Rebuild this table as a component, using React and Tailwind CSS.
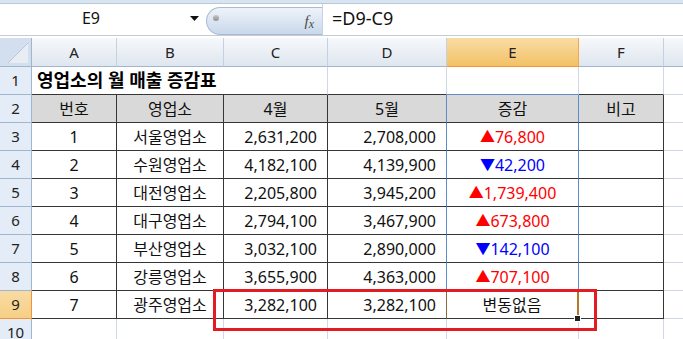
import React from "react";

const FONT = { fontFamily: '"Noto Sans", "Noto Sans CJK KR", sans-serif' };

const data = [
  ["1", "서울영업소", "2,631,200", "2,708,000", "▲", "76,800", "up"],
  ["2", "수원영업소", "4,182,100", "4,139,900", "▼", "42,200", "down"],
  ["3", "대전영업소", "2,205,800", "3,945,200", "▲", "1,739,400", "up"],
  ["4", "대구영업소", "2,794,100", "3,467,900", "▲", "673,800", "up"],
  ["5", "부산영업소", "3,032,100", "2,890,000", "▼", "142,100", "down"],
  ["6", "강릉영업소", "3,655,900", "4,363,000", "▲", "707,100", "up"],
];

function RowHead({ n, active }) {
  return (
    <div
      className={
        "w-[32px] shrink-0 h-full flex items-center justify-center text-[15px] border-r border-b " +
        (active
          ? "bg-gradient-to-b from-[#f9dba3] to-[#f6cf86] border-r-[#f29536] border-b-[#f29536] text-[#222]"
          : "bg-[#e4ecf7] border-r-[#9eb6ce] border-b-[#9eb6ce] text-[#222]")
      }
    >
      {n}
    </div>
  );
}

function ColHead({ w, label, active }) {
  return (
    <div
      className={
        w +
        " shrink-0 h-full flex items-center justify-center text-[15px] text-[#222] border-r border-b " +
        (active
          ? "bg-gradient-to-b from-[#f9dca5] to-[#f2c264] border-r-[#f0a848] border-b-[#f29536]"
          : "bg-gradient-to-b from-[#f6f8fb] to-[#dfe6ef] border-r-[#c3d1e2] border-b-[#9eb6ce]")
      }
    >
      {label}
    </div>
  );
}

const D = "border-[#363636]";

export default function App() {
  return (
    <div className="relative w-[683px] h-[339px] overflow-hidden bg-white" style={FONT}>
      {/* top strip */}
      <div className="h-[4px] bg-[#d9e4f1] border-b border-[#b8c9dd]" />
      {/* formula bar */}
      <div className="h-[31px] flex bg-white">
        <div className="w-[182px] flex items-center justify-center text-[16px] text-[#111] pb-[3px]">E9</div>
        <div className="w-[24px] flex items-center justify-center pb-[2px]">
          <svg width="9" height="5" viewBox="0 0 9 5">
            <path d="M0 0 L9 0 L4.5 5 Z" fill="#111" />
          </svg>
        </div>
        <div className="mt-[3px] w-[116px] h-[28px] rounded-l-full border border-r-0 border-[#a9bbd2] bg-gradient-to-b from-[#eef3f9] to-[#c9d8eb] flex items-center justify-between pl-[6px] pr-[8px]">
          <div className="w-[6px] h-[6px] rounded-full bg-gradient-to-b from-[#c8c8c8] to-[#8f8f8f] mb-[6px]" />
          <span className="italic text-[#4a4a4a] text-[15px] leading-none" style={{ fontFamily: '"Liberation Serif", serif' }}>
            f<span className="text-[12px] relative top-[2px]">x</span>
          </span>
        </div>
        <div className="border-l border-[#c7d3e2] flex-1 flex items-center pl-[9px] text-[18px] text-[#111] pb-[3px]">
          =D9-C9
        </div>
      </div>
      <div className="h-[1px] bg-[#c6ccd6]" />
      <div className="h-[2px] bg-white" />

      {/* column headers */}
      <div className="h-[29px] flex">
        <div className="w-[32px] shrink-0 h-full bg-[#d3dfee] border-r border-b border-[#9eb6ce] relative">
          <svg className="absolute right-[3px] bottom-[3px]" width="20" height="20" viewBox="0 0 20 20">
            <path d="M20 0 L20 20 L0 20 Z" fill="#e8edf3" />
            <path d="M20 0 L0 20" stroke="#b9c7d8" strokeWidth="1" />
          </svg>
        </div>
        <ColHead w="w-[85px]" label="A" />
        <ColHead w="w-[107px]" label="B" />
        <ColHead w="w-[104px]" label="C" />
        <ColHead w="w-[119px]" label="D" />
        <ColHead w="w-[132px]" label="E" active />
        <ColHead w="w-[85px]" label="F" />
        <ColHead w="w-[40px]" label="" />
      </div>

      {/* row 1 */}
      <div className="h-[28px] flex">
        <RowHead n="1" />
        <div className={"w-[296px] shrink-0 border-r border-r-[#d0d7e5] border-b " + D + " flex items-center pl-[5px] text-[18px] font-bold text-black whitespace-nowrap"}>
          영업소의 월 매출 증감표
        </div>
        <div className={"w-[119px] shrink-0 border-r border-r-[#d0d7e5] border-b " + D} />
        <div className="w-[132px] shrink-0 border-r border-r-[#d0d7e5] border-b border-b-[#5b8ccc]" />
        <div className={"w-[85px] shrink-0 border-r border-r-[#d0d7e5] border-b " + D} />
        <div className="w-[40px] shrink-0 border-r border-b border-[#d0d7e5]" />
      </div>

      {/* row 2 header */}
      <div className="h-[28px] flex text-[16px] text-[#111]">
        <RowHead n="2" />
        <div className={"w-[85px] shrink-0 bg-[#d9d9d9] border-r border-b " + D + " flex items-center justify-center"}>번호</div>
        <div className={"w-[107px] shrink-0 bg-[#d9d9d9] border-r border-b " + D + " flex items-center justify-center"}>영업소</div>
        <div className={"w-[104px] shrink-0 bg-[#d9d9d9] border-r border-b " + D + " flex items-center justify-center"}>4월</div>
        <div className={"w-[119px] shrink-0 bg-[#d9d9d9] border-r border-r-[#5b8ccc] border-b " + D + " flex items-center justify-center"}>5월</div>
        <div className={"w-[132px] shrink-0 bg-[#d9d9d9] border-r border-r-[#5b8ccc] border-b " + D + " flex items-center justify-center"}>증감</div>
        <div className={"w-[85px] shrink-0 bg-[#d9d9d9] border-r border-b " + D + " flex items-center justify-center"}>비고</div>
        <div className="w-[40px] shrink-0 border-r border-b border-[#d0d7e5]" />
      </div>

      {/* rows 3-8 */}
      {data.map((r, i) => (
        <div key={i} className="h-[28px] flex text-[16px] text-[#111]">
          <RowHead n={String(i + 3)} />
          <div className={"w-[85px] shrink-0 border-r border-b " + D + " flex items-center justify-center"}>{r[0]}</div>
          <div className={"w-[107px] shrink-0 border-r border-b " + D + " flex items-center justify-center"}>{r[1]}</div>
          <div className={"w-[104px] shrink-0 border-r border-b " + D + " flex items-center justify-end pr-[10px]"}>{r[2]}</div>
          <div className={"w-[119px] shrink-0 border-r border-r-[#5b8ccc] border-b " + D + " flex items-center justify-end pr-[10px]"}>{r[3]}</div>
          <div
            className={
              "w-[132px] shrink-0 border-r border-r-[#5b8ccc] border-b " +
              D +
              " flex items-center justify-center " +
              (r[6] === "up" ? "text-[#ff0000]" : "text-[#0000ff]")
            }
          >
            <span className="text-[15px]">{r[4]}</span>
            {r[5]}
          </div>
          <div className={"w-[85px] shrink-0 border-r border-b " + D} />
          <div className="w-[40px] shrink-0 border-r border-b border-[#d0d7e5]" />
        </div>
      ))}

      {/* row 9 */}
      <div className="h-[28px] flex text-[16px] text-[#111]">
        <RowHead n="9" active />
        <div className={"w-[85px] shrink-0 border-r border-b " + D + " flex items-center justify-center"}>7</div>
        <div className={"w-[107px] shrink-0 border-r border-b " + D + " flex items-center justify-center"}>광주영업소</div>
        <div className={"w-[104px] shrink-0 border-r border-b " + D + " flex items-center justify-end pr-[10px]"}>3,282,100</div>
        <div className={"w-[119px] shrink-0 border-r border-r-[#8a6a3c] border-b " + D + " flex items-center justify-end pr-[10px]"}>3,282,100</div>
        <div className={"relative w-[132px] shrink-0 border-r-2 border-r-[#b8782a] border-b " + D + " flex items-center justify-center"}>
          변동없음
          <div className="absolute -right-[4px] -bottom-[4px] w-[7px] h-[7px] bg-[#222] border border-white" />
        </div>
        <div className={"w-[85px] shrink-0 border-r border-b " + D} />
        <div className="w-[40px] shrink-0 border-r border-b border-[#d0d7e5]" />
      </div>

      {/* row 10 */}
      <div className="h-[28px] flex">
        <RowHead n="10" />
        <div className="w-[85px] shrink-0 border-r border-b border-[#d0d7e5]" />
        <div className="w-[107px] shrink-0 border-r border-b border-[#d0d7e5]" />
        <div className="w-[104px] shrink-0 border-r border-b border-[#d0d7e5]" />
        <div className="w-[119px] shrink-0 border-r border-b border-[#d0d7e5]" />
        <div className="w-[132px] shrink-0 border-r border-b border-[#d0d7e5]" />
        <div className="w-[85px] shrink-0 border-r border-b border-[#d0d7e5]" />
        <div className="w-[40px] shrink-0 border-r border-b border-[#d0d7e5]" />
      </div>

      {/* red annotation box */}
      <div className="absolute left-[213px] top-[289px] w-[384px] h-[42px] border-[3px] border-[#e31b23]" />
    </div>
  );
}
